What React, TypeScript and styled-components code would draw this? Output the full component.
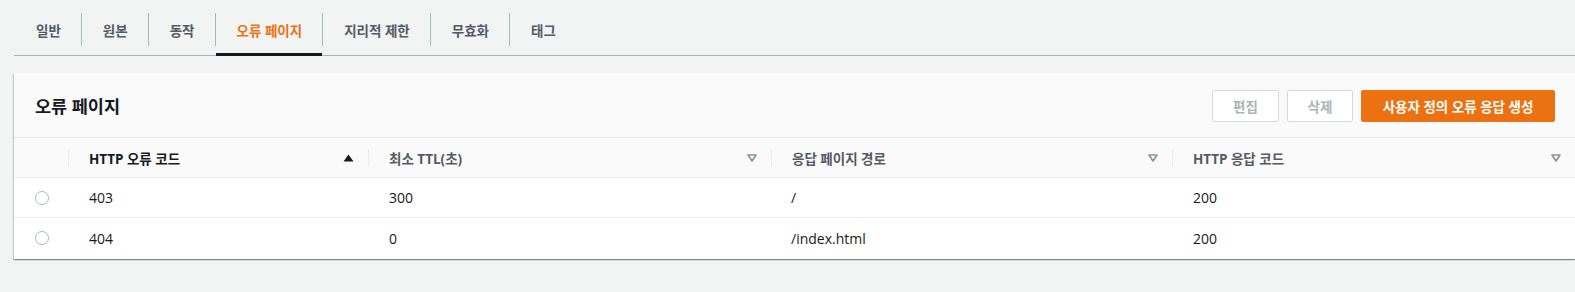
import React from 'react';
import styled, { createGlobalStyle } from 'styled-components';

const GlobalStyle = createGlobalStyle`
    body {
        margin: 0;
        background-color: #f2f3f3;
        font-family: 'Open Sans', 'Noto Sans CJK KR', sans-serif;
        color: #16191f;
    }
`;

// 탭 목록
const TAB_LIST = [
    { id: 'tab_00', name: '일반' },
    { id: 'tab_01', name: '원본' },
    { id: 'tab_02', name: '동작' },
    { id: 'tab_03', name: '오류 페이지' },
    { id: 'tab_04', name: '지리적 제한' },
    { id: 'tab_05', name: '무효화' },
    { id: 'tab_06', name: '태그' },
];

// 컬럼
const COLUMN_LIST = [
    { id: 'col_01', name: 'HTTP 오류 코드', width: 300, sorted: true },
    { id: 'col_02', name: '최소 TTL(초)', width: 403, sorted: false },
    { id: 'col_03', name: '응답 페이지 경로', width: 401, sorted: false },
    { id: 'col_04', name: 'HTTP 응답 코드', width: undefined, sorted: false },
];

const ROW_LIST = [
    { id: 'row_00', code: '403', ttl: '300', path: '/', response: '200' },
    { id: 'row_01', code: '404', ttl: '0', path: '/index.html', response: '200' },
];

const SortIcon = ({ sorted }: { sorted: boolean }) =>
    sorted ? (
        <svg width="11" height="8" viewBox="0 0 11 8">
            <path d="M5.5 0.5 L10.5 7.5 L0.5 7.5 Z" fill="#16191f" />
        </svg>
    ) : (
        <svg width="10" height="8" viewBox="0 0 10 8">
            <path d="M1 1 L9 1 L5 7 Z" fill="none" stroke="#879596" strokeWidth="1.6" strokeLinejoin="round" />
        </svg>
    );

const App = () => {
    const activeTab = 'tab_03';
    return (
        <PageDiv>
            <GlobalStyle />
            <TabBar>
                {TAB_LIST.map((tData, idx) => (
                    <React.Fragment key={tData.id}>
                        {idx > 0 && <TabDivider />}
                        <TabItem $active={tData.id === activeTab} $first={idx === 0}>
                            {tData.name}
                        </TabItem>
                    </React.Fragment>
                ))}
            </TabBar>
            <CardDiv>
                <CardHeader>
                    <TitleDiv>오류 페이지</TitleDiv>
                    <ButtonGroup>
                        <NormalButton $width={67} disabled>
                            편집
                        </NormalButton>
                        <NormalButton $width={66} disabled>
                            삭제
                        </NormalButton>
                        <PrimaryButton>사용자 정의 오류 응답 생성</PrimaryButton>
                    </ButtonGroup>
                </CardHeader>
                <Table>
                    <thead>
                        <tr>
                            <HeadCell style={{ width: 54 }} />
                            {COLUMN_LIST.map((cData) => (
                                <HeadCell key={cData.id} style={cData.width ? { width: cData.width } : undefined}>
                                    <HeadInner>
                                        <HeadDivider />
                                        <HeadLabel $sorted={cData.sorted}>{cData.name}</HeadLabel>
                                        <SortBox>
                                            <SortIcon sorted={cData.sorted} />
                                        </SortBox>
                                    </HeadInner>
                                </HeadCell>
                            ))}
                        </tr>
                    </thead>
                    <tbody>
                        {ROW_LIST.map((rData) => (
                            <BodyRow key={rData.id}>
                                <RadioCell>
                                    <RadioCircle />
                                </RadioCell>
                                <BodyCell>{rData.code}</BodyCell>
                                <BodyCell>{rData.ttl}</BodyCell>
                                <BodyCell $pad={20}>{rData.path}</BodyCell>
                                <BodyCell>{rData.response}</BodyCell>
                            </BodyRow>
                        ))}
                    </tbody>
                </Table>
            </CardDiv>
        </PageDiv>
    );
};

const PageDiv = styled.div`
    padding-left: 14px;
    height: 292px;
    box-sizing: border-box;
`;

const TabBar = styled.div`
    display: flex;
    border-bottom: 1px solid #aab7b8;
`;

const TabDivider = styled.div`
    width: 1px;
    height: 33px;
    margin-top: 13px;
    background-color: #aab7b8;
`;

const TabItem = styled.div<{ $active: boolean; $first: boolean }>`
    display: flex;
    align-items: center;
    box-sizing: border-box;
    height: 56px;
    margin-bottom: -1px;
    padding: 7px 20px 0 ${(p) => (p.$first ? 22 : 21)}px;
    border-bottom: 3px solid ${(p) => (p.$active ? '#16191f' : 'transparent')};
    font-size: 13.5px;
    font-weight: bold;
    color: ${(p) => (p.$active ? '#ec7211' : '#545b64')};
    white-space: nowrap;
`;

const CardDiv = styled.div`
    margin-top: 17px;
    background-color: #fff;
    box-shadow: 0 1px 1px 0 rgba(0, 28, 36, 0.3), 1px 1px 1px 0 rgba(0, 28, 36, 0.15),
        -1px 1px 1px 0 rgba(0, 28, 36, 0.15);
`;

const CardHeader = styled.div`
    display: flex;
    align-items: center;
    justify-content: space-between;
    box-sizing: border-box;
    height: 65px;
    padding: 0 20px 0 21px;
    background-color: #fafafa;
    border-bottom: 1px solid #eaeded;
`;

const TitleDiv = styled.div`
    font-size: 17.5px;
    font-weight: bold;
    color: #16191f;
`;

const ButtonGroup = styled.div`
    display: flex;
    gap: 8px;
    margin-top: 2px;
`;

const NormalButton = styled.button<{ $width: number }>`
    box-sizing: border-box;
    width: ${(p) => p.$width}px;
    height: 32px;
    padding: 0;
    border: 1px solid #d5dbdb;
    border-radius: 2px;
    background-color: #fff;
    font-family: inherit;
    font-size: 13.5px;
    font-weight: bold;
    color: #aab7b8;
`;

const PrimaryButton = styled.button`
    box-sizing: border-box;
    width: 194px;
    height: 32px;
    padding: 0;
    border: 1px solid #ec7211;
    border-radius: 2px;
    background-color: #ec7211;
    font-family: inherit;
    font-size: 13.5px;
    font-weight: bold;
    color: #fff;
`;

const Table = styled.table`
    width: 100%;
    border-collapse: collapse;
    table-layout: fixed;
`;

const HeadCell = styled.th`
    height: 39px;
    padding: 0;
    background-color: #fafafa;
    border-bottom: 1px solid #eaeded;
    text-align: left;
`;

const HeadInner = styled.div`
    display: flex;
    align-items: center;
`;

const HeadDivider = styled.div`
    width: 1px;
    height: 18px;
    background-color: #eaeded;
`;

const HeadLabel = styled.div<{ $sorted: boolean }>`
    margin-left: 20px;
    font-size: 13.5px;
    font-weight: bold;
    color: ${(p) => (p.$sorted ? '#16191f' : '#545b64')};
`;

const SortBox = styled.div`
    display: flex;
    margin-left: auto;
    margin-right: 14px;
`;

const BodyRow = styled.tr`
    height: 40px;
    border-bottom: 1px solid #eaeded;
    &:last-child {
        border-bottom: none;
        height: 41px;
    }
`;

const RadioCell = styled.td`
    padding: 0 0 0 21px;
`;

const RadioCircle = styled.div`
    width: 14px;
    height: 14px;
    box-sizing: border-box;
    border: 1px solid #aab7b8;
    border-radius: 50%;
    background-color: #fff;
`;

const BodyCell = styled.td<{ $pad?: number }>`
    padding: 0 0 0 ${(p) => p.$pad ?? 21}px;
    font-size: 14px;
    color: #16191f;
`;

export default App;
